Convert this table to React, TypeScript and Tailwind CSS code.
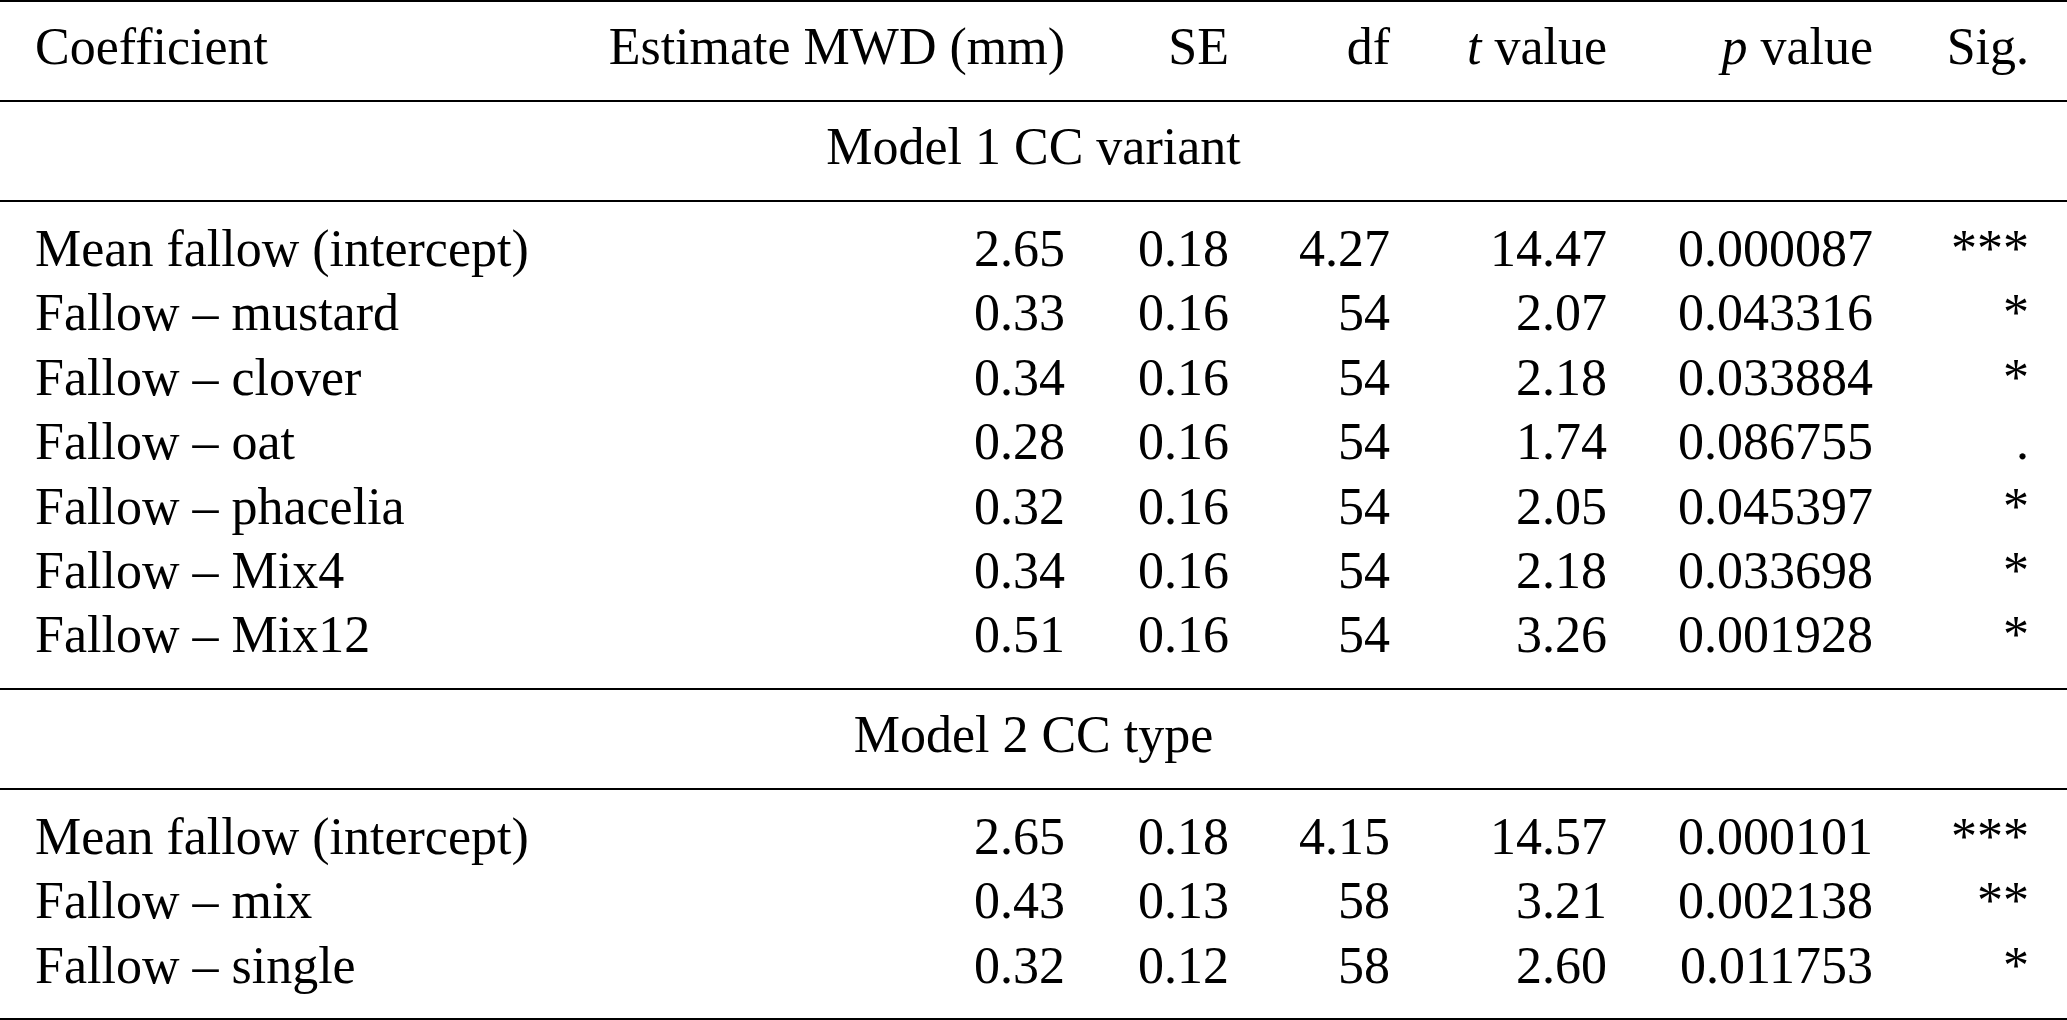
import { Fragment } from "react";

type Row = {
  name: string;
  est: string;
  se: string;
  df: string;
  t: string;
  p: string;
  sig: string;
};

const model1: Row[] = [
  { name: "Mean fallow (intercept)", est: "2.65", se: "0.18", df: "4.27", t: "14.47", p: "0.000087", sig: "***" },
  { name: "Fallow – mustard", est: "0.33", se: "0.16", df: "54", t: "2.07", p: "0.043316", sig: "*" },
  { name: "Fallow – clover", est: "0.34", se: "0.16", df: "54", t: "2.18", p: "0.033884", sig: "*" },
  { name: "Fallow – oat", est: "0.28", se: "0.16", df: "54", t: "1.74", p: "0.086755", sig: "." },
  { name: "Fallow – phacelia", est: "0.32", se: "0.16", df: "54", t: "2.05", p: "0.045397", sig: "*" },
  { name: "Fallow – Mix4", est: "0.34", se: "0.16", df: "54", t: "2.18", p: "0.033698", sig: "*" },
  { name: "Fallow – Mix12", est: "0.51", se: "0.16", df: "54", t: "3.26", p: "0.001928", sig: "*" },
];

const model2: Row[] = [
  { name: "Mean fallow (intercept)", est: "2.65", se: "0.18", df: "4.15", t: "14.57", p: "0.000101", sig: "***" },
  { name: "Fallow – mix", est: "0.43", se: "0.13", df: "58", t: "3.21", p: "0.002138", sig: "**" },
  { name: "Fallow – single", est: "0.32", se: "0.12", df: "58", t: "2.60", p: "0.011753", sig: "*" },
];

const grid =
  "grid grid-cols-[520px_510px_164px_161px_217px_266px_156px] pl-[35px] pr-[38px]";

const Rule = () => <div className="h-[2px] bg-black" />;

const DataBlock = ({ rows }: { rows: Row[] }) => (
  <div className={`${grid} pt-[15px] pb-[20px] leading-[64.4px]`}>
    {rows.map((r, i) => (
      <Fragment key={i}>
        <div className="text-left whitespace-nowrap">{r.name}</div>
        <div className="text-right">{r.est}</div>
        <div className="text-right">{r.se}</div>
        <div className="text-right">{r.df}</div>
        <div className="text-right">{r.t}</div>
        <div className="text-right">{r.p}</div>
        <div className="text-right">{r.sig}</div>
      </Fragment>
    ))}
  </div>
);

const Label = ({ text }: { text: string }) => (
  <div className="h-[98px] pt-[13px] leading-[64.4px] text-center">{text}</div>
);

const App = () => {
  return (
    <div className="w-full h-[1020px] bg-white text-black text-[52px] font-['Liberation_Serif','Times_New_Roman',serif] overflow-hidden">
      <Rule />
      {/* header */}
      <div className={`${grid} h-[98px] pt-[13px] leading-[64.4px]`}>
        <div className="text-left">Coefficient</div>
        <div className="text-right whitespace-nowrap">Estimate MWD (mm)</div>
        <div className="text-right">SE</div>
        <div className="text-right">df</div>
        <div className="text-right whitespace-nowrap">
          <i>t</i> value
        </div>
        <div className="text-right whitespace-nowrap">
          <i>p</i> value
        </div>
        <div className="text-right">Sig.</div>
      </div>
      <Rule />
      <Label text="Model 1 CC variant" />
      <Rule />
      <DataBlock rows={model1} />
      <Rule />
      <Label text="Model 2 CC type" />
      <Rule />
      <DataBlock rows={model2} />
      <Rule />
    </div>
  );
};

export default App;
